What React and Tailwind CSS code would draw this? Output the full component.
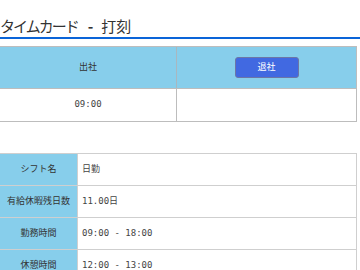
export default function App() {
  const font = { fontFamily: '"DejaVu Sans Mono", "Noto Sans CJK JP", monospace' };
  const rows = [
    ["シフト名", "日勤"],
    ["有給休暇残日数", "11.00日"],
    ["勤務時間", "09:00 - 18:00"],
    ["休憩時間", "12:00 - 13:00"],
  ];
  return (
    <div className="w-[360px] h-[270px] overflow-hidden bg-white" style={font}>
      <div
        className="h-[37px] flex items-end pb-[4px] text-[15px] text-[#333] leading-none"
        style={{ fontFamily: '"Noto Sans CJK JP", sans-serif' }}
      >
        <span className="tracking-[-2px]">タイムカード</span>
        <span className="ml-[10px] mr-[8px] font-bold">-</span>
        <span>打刻</span>
      </div>
      <div className="h-[2px] bg-[#0a64d8]" />
      <div className="mt-[7px] w-[357px] border-t border-r border-b border-[#bdbdbd] text-[9px] text-[#333]">
        <div className="grid grid-cols-[177px_1fr] h-[41px] bg-[#87ceeb]">
          <div className="border-r border-[#a9b7bf] flex items-center justify-center">出社</div>
          <div className="flex items-center justify-center">
            <button className="w-[64px] h-[21px] rounded-[3px] bg-[#4169e1] border border-[#6c76a6] text-white text-[9px] flex items-center justify-center">
              退社
            </button>
          </div>
        </div>
        <div className="grid grid-cols-[177px_1fr] h-[33px] border-t border-[#bdbdbd] text-[#444]">
          <div className="border-r border-[#bdbdbd] flex items-center justify-center">09:00</div>
          <div />
        </div>
      </div>
      <div className="mt-[31px] w-[357px] border-t border-r border-[#cfcfcf] text-[9px]">
        {rows.map(([k, v]) => (
          <div key={k} className="grid grid-cols-[78px_1fr] h-[32px] border-b border-[#cfcfcf]">
            <div className="bg-[#87ceeb] border-r border-[#cfcfcf] flex items-center justify-center text-[#333]">{k}</div>
            <div className="flex items-center pl-[4px] text-[#444]">{v}</div>
          </div>
        ))}
      </div>
    </div>
  );
}
